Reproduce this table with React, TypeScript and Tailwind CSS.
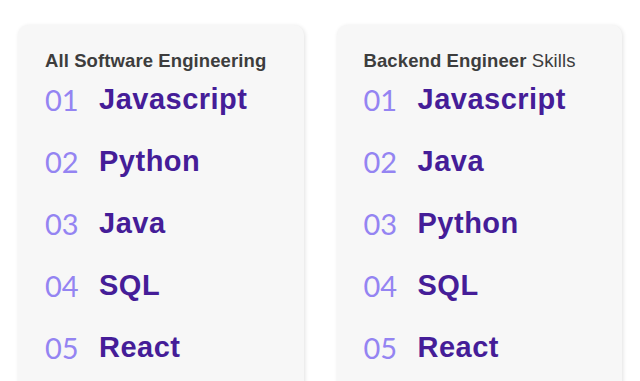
import React from "react";

const cards = [
  {
    bold: "All Software Engineering",
    rest: "",
    items: ["Javascript", "Python", "Java", "SQL", "React"],
  },
  {
    bold: "Backend Engineer",
    rest: " Skills",
    items: ["Javascript", "Java", "Python", "SQL", "React"],
  },
];

export default function App() {
  return (
    <div className="w-[640px] h-[381px] overflow-hidden bg-white pl-[18px] pr-[18px] pt-[25px]">
      <div className="grid grid-cols-2 gap-[33px]">
        {cards.map((c, i) => (
          <div
            key={i}
            className="h-[400px] rounded-[10px] bg-[#f7f7f7] shadow-[1px_1px_4px_rgba(0,0,0,0.12)] pl-[27px] pt-[23px]"
          >
            <div
              className="text-[18.5px] leading-[26px] text-[#3d3d3d] tracking-[0.1px]"
              style={{ fontFamily: "'Liberation Sans', Arial, sans-serif" }}
            >
              <span className="font-bold">{c.bold}</span>
              <span className="font-normal">{c.rest}</span>
            </div>
            <div className="mt-[8px] flex flex-col gap-[26px]">
              {c.items.map((s, j) => (
                <div key={j} className="flex items-center h-[36px]">
                  <span
                    className="w-[54px] text-[29px] font-normal text-[#9484f2]"
                    style={{ fontFamily: "Lato, sans-serif" }}
                  >
                    0{j + 1}
                  </span>
                  <span
                    className="text-[29px] font-bold text-[#451d98] tracking-[0.5px]"
                    style={{ fontFamily: "'Liberation Sans', Arial, sans-serif" }}
                  >
                    {s}
                  </span>
                </div>
              ))}
            </div>
          </div>
        ))}
      </div>
    </div>
  );
}
